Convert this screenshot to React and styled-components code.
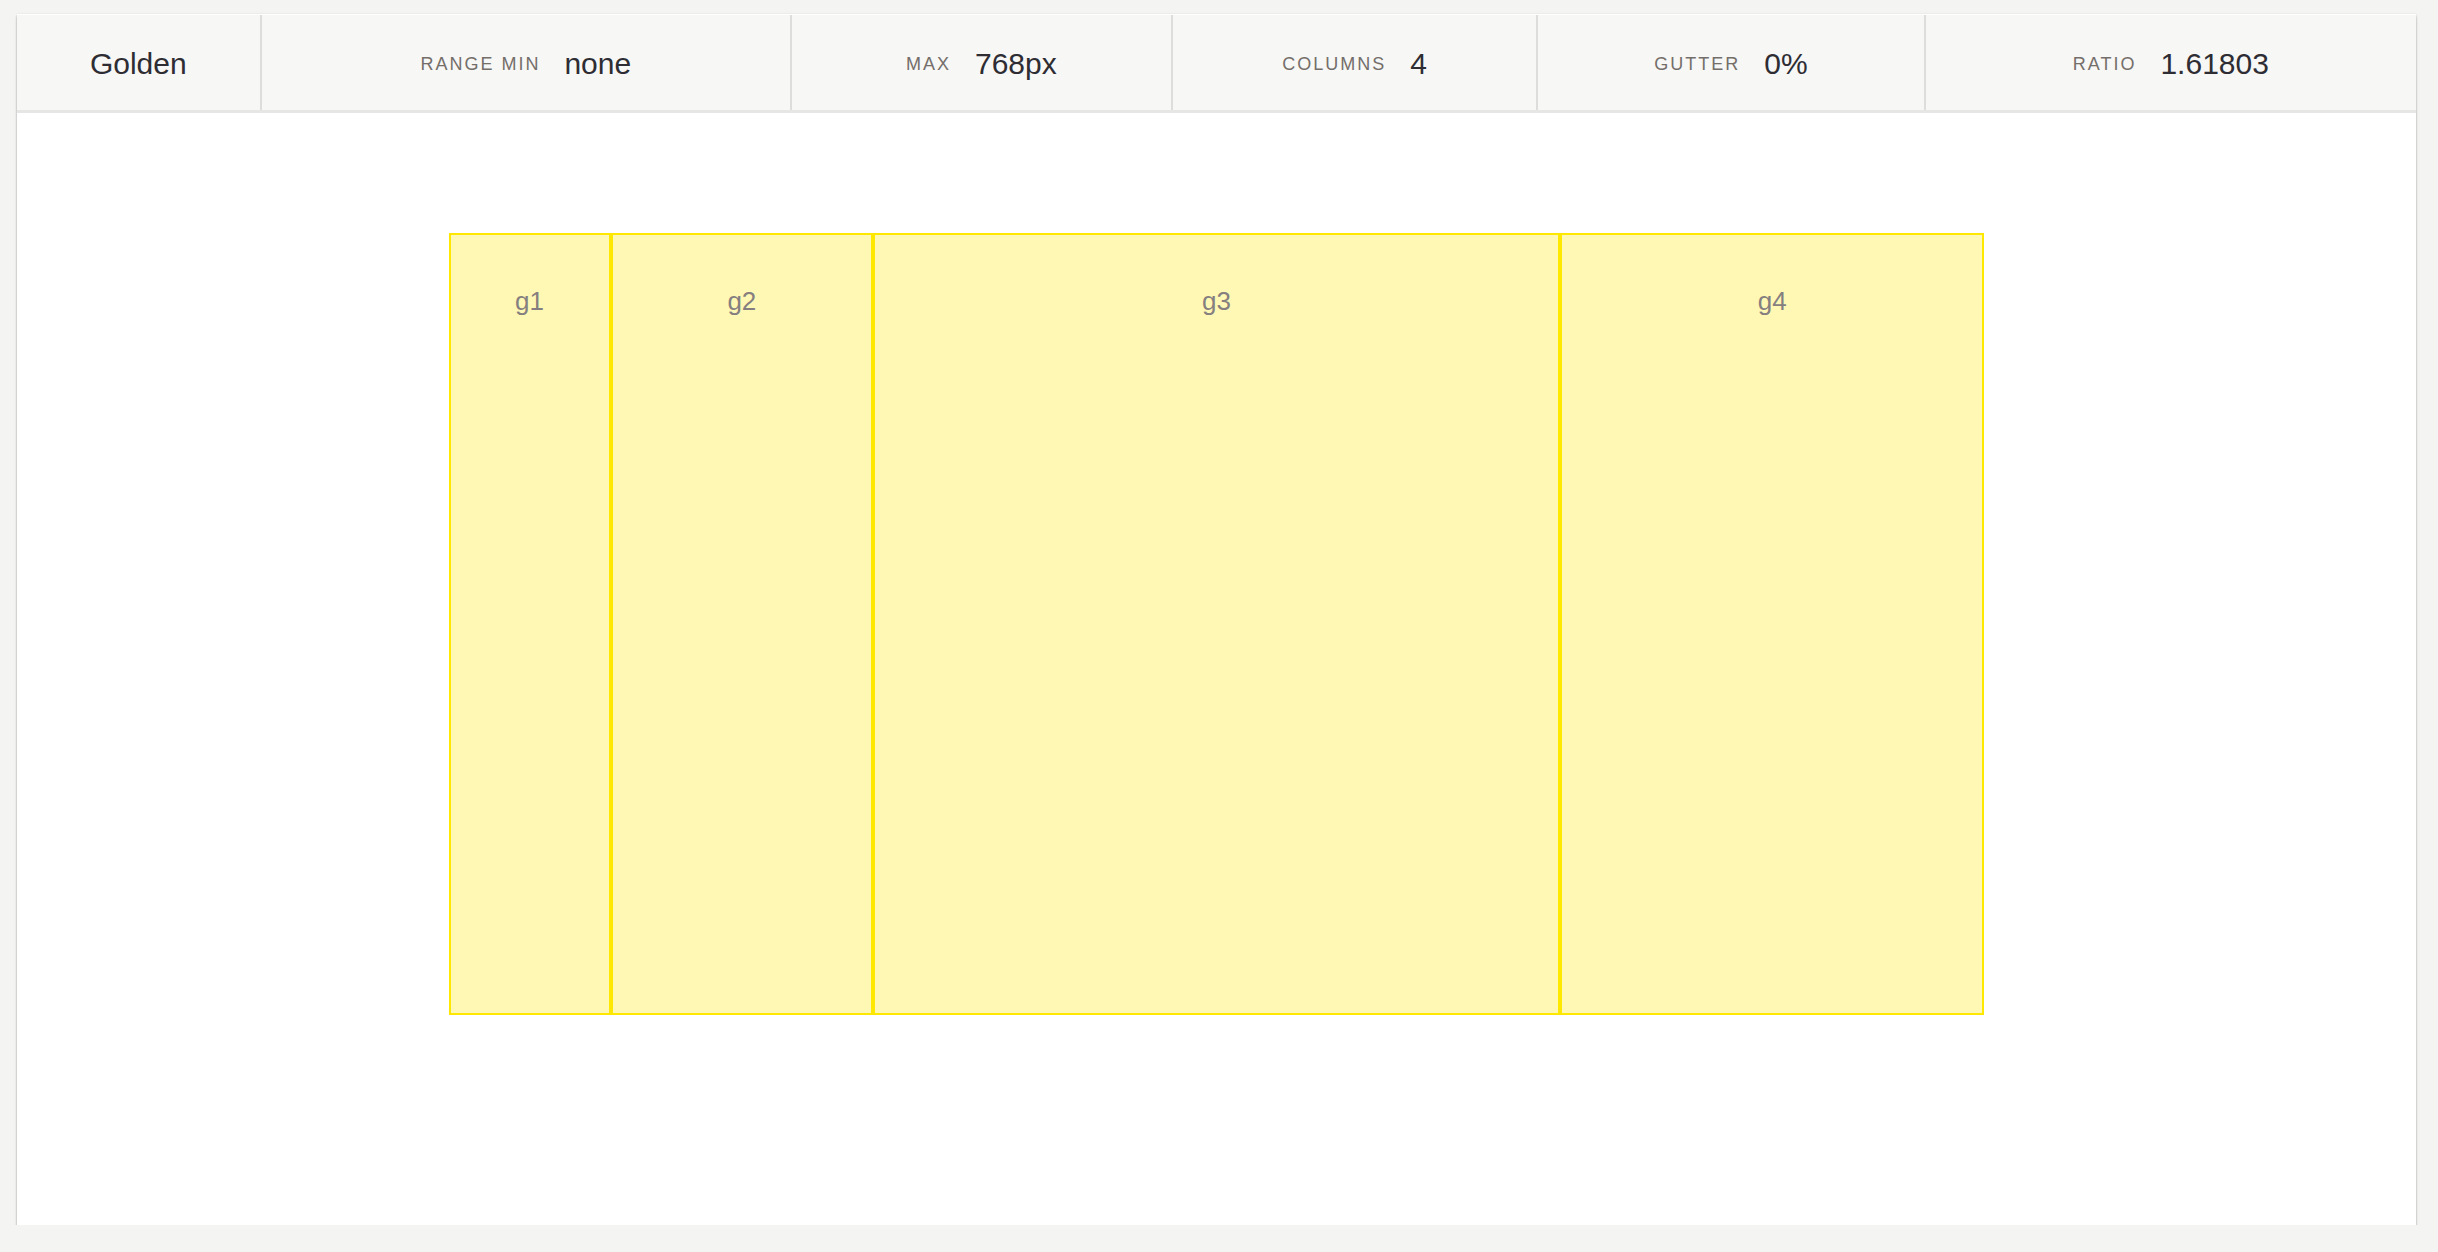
import React from 'react'
import styled, { createGlobalStyle } from 'styled-components'

const GlobalStyle = createGlobalStyle`
  html, body {
    margin: 0;
    padding: 0;
    background: #f4f4f2;
    font-family: "Liberation Sans", Arial, Helvetica, sans-serif;
  }
`

const Card = styled.div`
  margin: 14px 22px 0 17px;
  height: 1211px;
  background: #fff;
  border-top: 1px solid #fff;
  box-sizing: border-box;
  box-shadow: 0 2px 2px rgba(0, 0, 0, .26), 0 4px 5px rgba(0, 0, 0, .06), 0 0 2px rgba(0, 0, 0, .1);
`

const Toolbar = styled.table`
  width: 100%;
  height: 98px;
  border-collapse: collapse;
  background: #f7f7f5;
  border-bottom: 3px solid #e6e6e4;
`

const Cell = styled.td`
  padding: 3px 0 0;
  text-align: center;
  vertical-align: middle;
  white-space: nowrap;
  border-left: 2px solid #dddddb;
  &:first-child {
    border-left: none;
  }
`

const Label = styled.span`
  font-size: 18px;
  letter-spacing: 2px;
  text-transform: uppercase;
  color: #746e6a;
  margin-right: 24px;
  vertical-align: middle;
`

const Value = styled.span`
  font-size: 30px;
  color: #2e2d33;
  vertical-align: middle;
`

const Stage = styled.div`
  padding-top: 120px;
  display: flex;
  justify-content: center;
`

const Grid = styled.div`
  width: 1536px;
  height: 782px;
  display: grid;
  grid-template-columns: ${p => p.cols};
`

const Col = styled.div`
  box-sizing: border-box;
  border: 2px solid #ffe800;
  background: #fef8b4;
  color: #857f80;
  font-size: 26px;
  text-align: center;
  padding-top: 51px;
  line-height: 30px;
`

const fields = [
  { label: 'Range min', value: 'none' },
  { label: 'Max', value: '768px' },
  { label: 'Columns', value: '4' },
  { label: 'Gutter', value: '0%' },
  { label: 'Ratio', value: '1.61803' },
]

const phi = 1.61803
const columns = [
  { name: 'g1', size: 1 },
  { name: 'g2', size: phi },
  { name: 'g3', size: phi * phi * phi },
  { name: 'g4', size: phi * phi },
]

export default function App() {
  const cols = columns.map(c => `${c.size}fr`).join(' ')
  return (
    <>
      <GlobalStyle />
      <Card>
        <Toolbar>
          <tbody>
            <tr>
              <Cell><Value>Golden</Value></Cell>
              {fields.map(f => (
                <Cell key={f.label}>
                  <Label>{f.label}</Label>
                  <Value>{f.value}</Value>
                </Cell>
              ))}
            </tr>
          </tbody>
        </Toolbar>
        <Stage>
          <Grid cols={cols}>
            {columns.map(c => <Col key={c.name}>{c.name}</Col>)}
          </Grid>
        </Stage>
      </Card>
    </>
  )
}
